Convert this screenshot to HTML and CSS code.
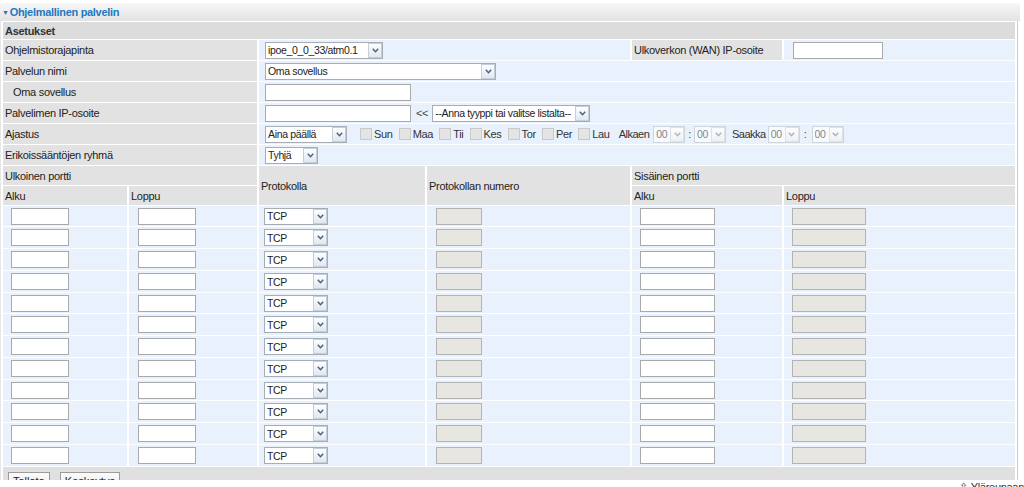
FILE: index.html
```html
<!DOCTYPE html>
<html lang="fi">
<head>
<meta charset="utf-8">
<title>Ohjelmallinen palvelin</title>
<link rel="stylesheet" href="styles.css">
</head>
<body>
<div class="frame">
  <div class="title"><span class="tri">&#9660;</span>Ohjelmallinen palvelin</div>
  <table class="grid">
    <colgroup>
      <col class="c1"><col class="c2"><col class="c3"><col class="c4"><col class="c5"><col class="c6">
    </colgroup>
    <tr class="sec-row"><td colspan="6" class="sec">Asetukset</td></tr>
    <tr class="r">
      <td colspan="2" class="lbl">Ohjelmistorajapinta</td>
      <td colspan="2" class="val"><span class="sel m4 w118"><select><option>ipoe_0_0_33/atm0.1</option></select><span class="arr"><svg width="7" height="5" viewBox="0 0 7 5"><path d="M0.8 0.8 L3.5 3.8 L6.2 0.8" fill="none" stroke="#4b5d80" stroke-width="1.4"/></svg></span></span></td>
      <td class="lbl">Ulkoverkon (WAN) IP-osoite</td>
      <td class="val"><input class="txt m7 w90" type="text"></td>
    </tr>
    <tr class="r">
      <td colspan="2" class="lbl">Palvelun nimi</td>
      <td colspan="4" class="val"><span class="sel m4 w231"><select><option>Oma sovellus</option></select><span class="arr"><svg width="7" height="5" viewBox="0 0 7 5"><path d="M0.8 0.8 L3.5 3.8 L6.2 0.8" fill="none" stroke="#4b5d80" stroke-width="1.4"/></svg></span></span></td>
    </tr>
    <tr class="r">
      <td colspan="2" class="lbl ind">Oma sovellus</td>
      <td colspan="4" class="val"><input class="txt m4 w146" type="text"></td>
    </tr>
    <tr class="r">
      <td colspan="2" class="lbl">Palvelimen IP-osoite</td>
      <td colspan="4" class="val"><div class="line"><input class="txt m4 w146" type="text"><span class="ll">&lt;&lt;</span><span class="sel w158"><select><option>--Anna tyyppi tai valitse listalta--</option></select><span class="arr"><svg width="7" height="5" viewBox="0 0 7 5"><path d="M0.8 0.8 L3.5 3.8 L6.2 0.8" fill="none" stroke="#4b5d80" stroke-width="1.4"/></svg></span></span></div></td>
    </tr>
    <tr class="r">
      <td colspan="2" class="lbl">Ajastus</td>
      <td colspan="4" class="val"><div class="line">
        <span class="sel m4 w82"><select><option>Aina päällä</option></select><span class="arr"><svg width="7" height="5" viewBox="0 0 7 5"><path d="M0.8 0.8 L3.5 3.8 L6.2 0.8" fill="none" stroke="#4b5d80" stroke-width="1.4"/></svg></span></span>
        <input type="checkbox" class="cb first" disabled><span class="day">Sun</span>
        <input type="checkbox" class="cb" disabled><span class="day">Maa</span>
        <input type="checkbox" class="cb" disabled><span class="day">Tii</span>
        <input type="checkbox" class="cb" disabled><span class="day">Kes</span>
        <input type="checkbox" class="cb" disabled><span class="day">Tor</span>
        <input type="checkbox" class="cb" disabled><span class="day">Per</span>
        <input type="checkbox" class="cb" disabled><span class="day">Lau</span>
        <span class="tl t-from">Alkaen</span>
        <span class="sel dsel w32"><select disabled><option>00</option></select><span class="arr"><svg width="7" height="5" viewBox="0 0 7 5"><path d="M0.8 0.8 L3.5 3.8 L6.2 0.8" fill="none" stroke="#a9b3c4" stroke-width="1.4"/></svg></span></span>
        <span class="colon">:</span>
        <span class="sel dsel w32"><select disabled><option>00</option></select><span class="arr"><svg width="7" height="5" viewBox="0 0 7 5"><path d="M0.8 0.8 L3.5 3.8 L6.2 0.8" fill="none" stroke="#a9b3c4" stroke-width="1.4"/></svg></span></span>
        <span class="tl t-to">Saakka</span>
        <span class="sel dsel w32"><select disabled><option>00</option></select><span class="arr"><svg width="7" height="5" viewBox="0 0 7 5"><path d="M0.8 0.8 L3.5 3.8 L6.2 0.8" fill="none" stroke="#a9b3c4" stroke-width="1.4"/></svg></span></span>
        <span class="colon c2nd">:</span>
        <span class="sel dsel w32"><select disabled><option>00</option></select><span class="arr"><svg width="7" height="5" viewBox="0 0 7 5"><path d="M0.8 0.8 L3.5 3.8 L6.2 0.8" fill="none" stroke="#a9b3c4" stroke-width="1.4"/></svg></span></span>
      </div></td>
    </tr>
    <tr class="r">
      <td colspan="2" class="lbl">Erikoissääntöjen ryhmä</td>
      <td colspan="4" class="val"><span class="sel m4 w53"><select><option>Tyhjä</option></select><span class="arr"><svg width="7" height="5" viewBox="0 0 7 5"><path d="M0.8 0.8 L3.5 3.8 L6.2 0.8" fill="none" stroke="#4b5d80" stroke-width="1.4"/></svg></span></span></td>
    </tr>
    <tr class="h">
      <td colspan="2" class="lbl">Ulkoinen portti</td>
      <td rowspan="2" class="lbl">Protokolla</td>
      <td rowspan="2" class="lbl">Protokollan numero</td>
      <td colspan="2" class="lbl">Sisäinen portti</td>
    </tr>
    <tr class="h">
      <td class="lbl">Alku</td>
      <td class="lbl">Loppu</td>
      <td class="lbl">Alku</td>
      <td class="lbl">Loppu</td>
    </tr>
  </table>
  <table class="grid ports" id="ports">
    <colgroup>
      <col class="c1"><col class="c2"><col class="c3"><col class="c4"><col class="c5"><col class="c6">
    </colgroup>
  </table>
  <table class="grid bar">
    <tr><td class="btns"><button type="button" class="btn">Tallata</button><button type="button" class="btn">Keskeytys</button></td></tr>
  </table>
</div>
<div class="foot"><span class="up">&#8679;</span> Yläreunaan</div>
<script src="app.js"></script>
</body>
</html>
```
FILE: app.js
```js
(function () {
  var t = document.getElementById('ports');
  var arrow = '<span class="arr"><svg width="7" height="5" viewBox="0 0 7 5"><path d="M0.8 0.8 L3.5 3.8 L6.2 0.8" fill="none" stroke="#4b5d80" stroke-width="1.4"/></svg></span>';
  var html = '';
  for (var i = 0; i < 12; i++) {
    html += '<tr class="d">' +
      '<td class="val"><input type="text" class="txt m6 w58"></td>' +
      '<td class="val"><input type="text" class="txt m7 w58"></td>' +
      '<td class="val"><span class="sel m3 w64"><select><option>TCP</option><option>UDP</option><option>TCP/UDP</option></select>' + arrow + '</span></td>' +
      '<td class="val"><input type="text" class="txt dis m7 w46" disabled></td>' +
      '<td class="val"><input type="text" class="txt m6 w75"></td>' +
      '<td class="val"><input type="text" class="txt dis m6 w74" disabled></td>' +
      '</tr>';
  }
  t.insertAdjacentHTML('beforeend', html);
})();
```
FILE: styles.css
```css
* { box-sizing: border-box; }

body {
  margin: 0;
  font: 11px "Liberation Sans", Arial, sans-serif;
  letter-spacing: -0.3px;
  color: #222;
  background: #fff;
}

.frame {
  height: 480px;
  overflow: hidden;
}

.title {
  margin-top: 3px;
  width: 1020px;
  height: 18px;
  line-height: 18px;
  padding-left: 2px;
  background: linear-gradient(#f7f7f7, #e3e3e3);
  color: #1d78c1;
  font-weight: bold;
}

.tri {
  font-size: 7px;
  margin-right: 1px;
  vertical-align: 1px;
  color: #1d78c1;
}

.grid {
  border-collapse: separate;
  border-spacing: 2px 1px;
  table-layout: fixed;
  width: 1018px;
  border-left: 1px solid #e6e6e6;
  border-right: 1px solid #cdcdcd;
}

.ports, .bar { margin-top: -1px; }

.c1 { width: 124px; }
.c2 { width: 128px; }
.c3 { width: 166px; }
.c4 { width: 203px; }
.c5 { width: 150px; }
.c6 { width: 231px; }

td {
  padding: 0 2px;
  vertical-align: middle;
  white-space: nowrap;
  overflow: hidden;
}

.sec {
  height: 17px;
  background: #dcdcdc;
  font-weight: bold;
  color: #333;
}

.r td { height: 20px; }
.h td { height: 19px; }
.d td { height: 21px; }
.d:nth-child(4n+1) td { height: 20px; }

.lbl { background: #e2e2e2; color: #222; }
.val { background: #e9f2fc; }
.ind { padding-left: 10px; }

.line {
  display: flex;
  align-items: center;
}

.txt {
  height: 17px;
  margin: 0;
  padding: 0 2px;
  border: 1px solid #a9a9a9;
  background: #fff;
  font: inherit;
  vertical-align: middle;
}

.txt.dis {
  background: #e8e6e1;
  border-color: #b3b3b3;
}

.sel {
  position: relative;
  display: inline-block;
  flex: none;
  height: 17px;
  vertical-align: middle;
}

.sel select {
  -webkit-appearance: none;
  appearance: none;
  width: 100%;
  height: 17px;
  margin: 0;
  padding: 0 16px 0 2px;
  border: 1px solid #a6adb5;
  border-radius: 0;
  background: #fff;
  font-family: inherit;
  font-size: 10.5px;
  letter-spacing: -0.35px;
  color: #222;
  outline: none;
}

.sel .arr {
  position: absolute;
  top: 1px;
  right: 1px;
  width: 14px;
  height: 15px;
  border: 1px solid #c6ced8;
  background: linear-gradient(#fdfeff, #e1e8f0);
  display: flex;
  align-items: center;
  justify-content: center;
  pointer-events: none;
}

.dsel select {
  border-color: #c4c9ce;
  color: #555;
  background: #fff;
}

.dsel .arr {
  border-color: #dde2e8;
  background: linear-gradient(#fdfdfd, #eef1f4);
}

.m3 { margin-left: 3px; }
.m4 { margin-left: 4px; }
.m6 { margin-left: 6px; }
.m7 { margin-left: 7px; }

.w32 { width: 32px; }
.w46 { width: 46px; }
.w53 { width: 53px; }
.w58 { width: 58px; }
.w64 { width: 64px; }
.w74 { width: 74px; }
.w75 { width: 75px; }
.w82 { width: 82px; }
.w90 { width: 90px; }
.w118 { width: 118px; }
.w146 { width: 146px; }
.w158 { width: 158px; }
.w231 { width: 231px; }

.ll {
  margin: 0 4px 0 5px;
  color: #444;
}

.cb {
  -webkit-appearance: none;
  appearance: none;
  width: 12px;
  height: 12px;
  margin: 0 2px 0 6px;
  border: 1px solid #c9c9c9;
  background: #e4e4e4;
  flex: none;
}

.cb.first { margin-left: 13px; }

.day { color: #333; flex: none; }

.tl { flex: none; color: #333; letter-spacing: -0.5px; }
.t-from { margin: 0 4px 0 9px; }
.t-to { margin: 0 2px 0 6px; }

.colon { flex: none; margin: 0 3px 0 3px; color: #444; }
.colon.c2nd { margin: 0 5px 0 4px; }

.bar td { padding: 0; }

.btns {
  height: 12px;
  background: #e0e0e0;
  padding: 5px 0 0 5px !important;
  vertical-align: top;
}

.btn {
  height: 17px;
  line-height: 14px;
  margin: 0 10px 0 0;
  padding: 0 4px;
  border: 1px solid #9c9c9c;
  background: linear-gradient(#fbfbfb, #ececec);
  font: inherit;
  color: #222;
  vertical-align: top;
}

.foot {
  text-align: right;
  padding-right: 0;
  margin-top: 1px;
  color: #333;
}

.up { color: #555; }
```
